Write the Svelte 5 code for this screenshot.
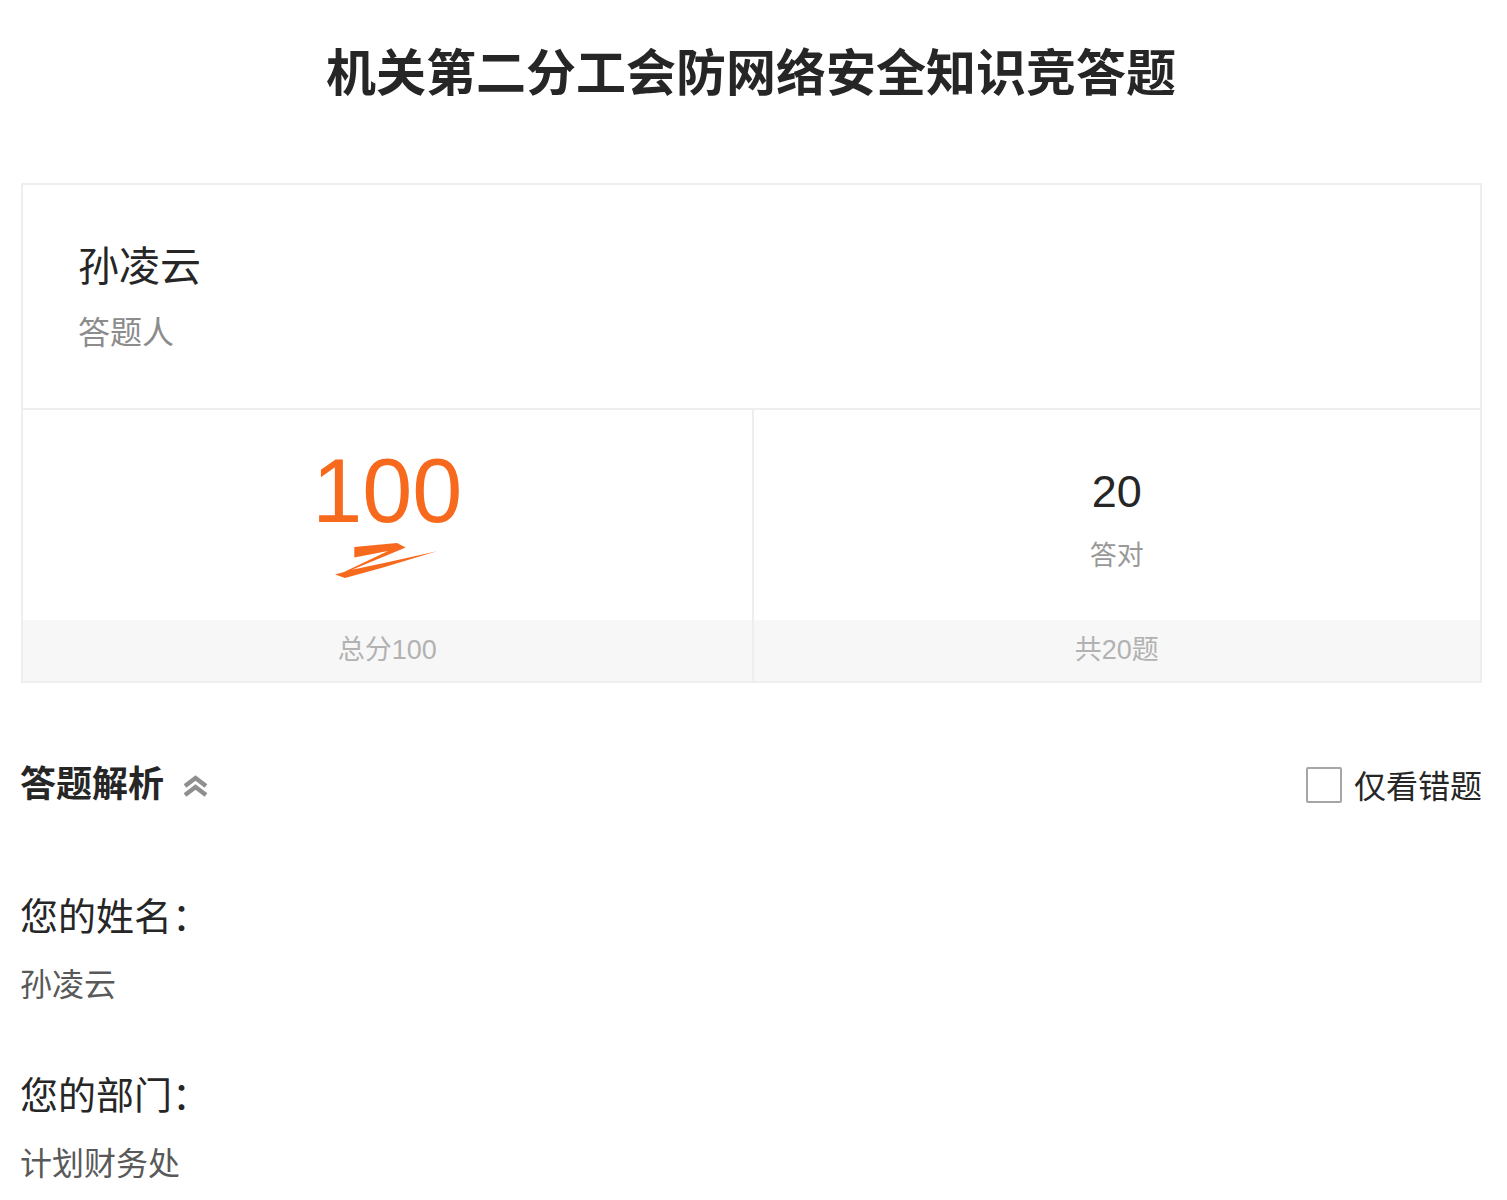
<script>
    let expanded = $state(true);
    let onlyWrong = $state(false);

    const title = "机关第二分工会防网络安全知识竞答题";
    const user = "孙凌云";
    const score = 100;
    const totalScore = 100;
    const correct = 20;
    const total = 20;

    const answers = [
        {question: "您的姓名：", answer: "孙凌云", wrong: false},
        {question: "您的部门：", answer: "计划财务处", wrong: false},
    ];

    let visible = $derived(onlyWrong ? answers.filter((a) => a.wrong) : answers);
</script>

<main>
    <h1>{title}</h1>

    <section class="card">
        <div class="user">
            <div class="name">{user}</div>
            <div class="role">答题人</div>
        </div>
        <div class="stats">
            <div class="stat">
                <div class="value">
                    <div class="score">{score}</div>
                    <svg class="underline" width="104" height="36" viewBox="0 0 104 36" aria-hidden="true">
                        <path d="M19.300 4L62 0L70.700 4.500L49 13.500L17 26.700L49 20L102 8.300L72 17.300L49 24.300L10 35L0 31.500L9 29L53 8L19.300 14.500Z" fill="#f76a1e"/>
                    </svg>
                </div>
                <div class="foot">总分{totalScore}</div>
            </div>
            <div class="stat">
                <div class="value">
                    <div class="count">{correct}</div>
                    <div class="caption">答对</div>
                </div>
                <div class="foot">共{total}题</div>
            </div>
        </div>
    </section>

    <div class="bar">
        <button type="button" aria-expanded={expanded} onclick={() => (expanded = !expanded)}>
            答题解析
            <svg class:closed={!expanded} width="24" height="24" viewBox="0 0 24 24" aria-hidden="true">
                <path d="M1 13L11.500 5L22 13M1 22L11.500 14L22 22" fill="none" stroke="#8f8f8f" stroke-width="4.500"/>
            </svg>
        </button>
        <label>
            <input type="checkbox" bind:checked={onlyWrong}/>
            <span>仅看错题</span>
        </label>
    </div>

    {#if expanded}
        <div class="items">
            {#each visible as item}
                <section>
                    <h2>{item.question}</h2>
                    <p>{item.answer}</p>
                </section>
            {/each}
        </div>
    {/if}
</main>

<style>
    :global(body) {
        margin: 0;
        background: #fff;
    }

    main {
        padding: 36px 25px 0 20px;
        font-family: "Liberation Sans", "Noto Sans CJK SC", sans-serif;
        color: #262626;
    }

    h1 {
        margin: 0;
        font-size: 50px;
        line-height: 76px;
        font-weight: 700;
        text-align: center;
    }

    .card {
        margin: 71px 0 0 1px;
        border: 2px solid #eee;
    }

    .user {
        padding: 50px 55px 51px;
        border-bottom: 2px solid #eee;
    }

    .name {
        font-size: 41px;
        line-height: 64px;
    }

    .role {
        font-size: 32px;
        line-height: 48px;
        margin-top: 10px;
        color: #8c8c8c;
    }

    .stats {
        display: grid;
        grid-template-columns: 1fr 1fr;
    }

    .stat + .stat {
        border-left: 2px solid #eee;
    }

    .value {
        height: 210px;
        display: flex;
        flex-direction: column;
        align-items: center;
    }

    .score {
        padding-top: 33px;
        font-size: 90px;
        line-height: 96px;
        color: #f76a1e;
    }

    .underline {
        display: block;
        margin-top: 4px;
    }

    .count {
        padding-top: 50px;
        font-size: 45px;
        line-height: 64px;
    }

    .caption {
        font-size: 27px;
        line-height: 64px;
        color: #999;
    }

    .foot {
        font-size: 27px;
        line-height: 61px;
        text-align: center;
        color: #b2b2b2;
        background: #f7f7f7;
    }

    .bar {
        display: flex;
        justify-content: space-between;
        align-items: center;
        margin-top: 70px;
    }

    button {
        display: flex;
        align-items: center;
        gap: 20px;
        padding: 0;
        border: 0;
        background: none;
        font: inherit;
        font-size: 36px;
        line-height: 64px;
        font-weight: 700;
        color: inherit;
        cursor: pointer;
    }

    .closed {
        transform: rotate(180deg);
    }

    label {
        display: flex;
        align-items: center;
        gap: 12px;
        font-size: 32px;
        line-height: 60px;
    }

    label span {
        padding-top: 4px;
    }

    input {
        appearance: none;
        box-sizing: border-box;
        width: 36px;
        height: 36px;
        margin: 0;
        border: 2px solid #a6a6a6;
        border-radius: 2px;
        background: #fff;
    }

    input:checked {
        background: #f76a1e;
    }

    .items {
        display: flex;
        flex-direction: column;
        gap: 47px;
        margin-top: 68px;
    }

    h2 {
        margin: 0;
        font-size: 38px;
        line-height: 64px;
        font-weight: 400;
    }

    p {
        margin: 4px 0 0;
        font-size: 32px;
        line-height: 64px;
        color: #595959;
    }
</style>
